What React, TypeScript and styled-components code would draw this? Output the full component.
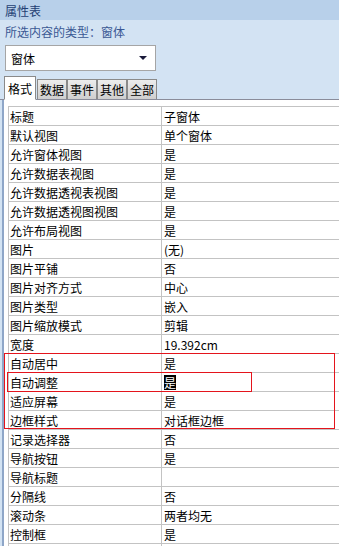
import React from "react";
import styled, { createGlobalStyle } from "styled-components";

const Global = createGlobalStyle`
  html, body { margin: 0; padding: 0; overflow: hidden; }
  body {
    background: #d3e3f3;
    font-family: "Noto Sans CJK SC", "Noto Sans", sans-serif;
    font-size: 12px;
  }
`;

const Sheet = styled.div`
  width: 339px;
  height: 546px;
  display: flex;
  flex-direction: column;
  background: #d3e3f3;
  overflow: hidden;
  & > * { flex-shrink: 0; }
`;

const TitleBar = styled.div`
  height: 20px;
  background: #b8d0ea;
  color: #1f3f73;
  padding-left: 5px;
  display: flex;
  align-items: center;
  font-size: 12px;
`;

const Caption = styled.div`
  height: 22px;
  padding-left: 5px;
  display: flex;
  align-items: center;
  color: #3a5894;
`;

const Select = styled.div`
  margin: 3px 0 0 5px;
  height: 24px;
  background: #fff;
  border: 1px solid #a5a5a5;
  display: flex;
  align-items: center;
  justify-content: space-between;
  padding: 0 8px 0 5px;
  box-sizing: content-box;
  width: 136px;
  color: #000;
`;

const Arrow = styled.span`
  width: 0;
  height: 0;
  border-left: 4px solid transparent;
  border-right: 4px solid transparent;
  border-top: 4px solid #1a1a3a;
`;

const TabRow = styled.div`
  margin-top: 5px;
  display: flex;
  align-items: flex-end;
  padding-left: 4px;
  height: 23px;
  border-bottom: 1px solid #8a8c9a;
`;

const Tab = styled.div<{ $active?: boolean }>`
  width: ${(p) => (p.$active ? "32px" : "30px")};
  height: ${(p) => (p.$active ? "24px" : "20px")};
  margin-right: ${(p) => (p.$active ? "1px" : "0")};
  margin-bottom: ${(p) => (p.$active ? "-1px" : "0")};
  display: flex;
  align-items: center;
  justify-content: center;
  box-sizing: border-box;
  color: #000;
  border: 1px solid #8a8a8a;
  border-bottom: ${(p) => (p.$active ? "1px solid #fff" : "none")};
  background: ${(p) =>
    p.$active ? "#fff" : "linear-gradient(#ececec, #cfcfcf)"};
`;

const Panel = styled.div`
  flex: 1 1 auto;
  min-height: 0;
  overflow: hidden;
  background: #fff;
  margin-left: 2px;
  border-left: 2px solid #8ea6c8;
  padding: 6px 0 0 4px;
`;

const Table = styled.div`
  position: relative;
  border-top: 1px solid #c3c3c3;
  border-left: 1px solid #c3c3c3;
`;

const Row = styled.div`
  display: grid;
  grid-template-columns: 152px 1fr;
  height: 19px;
  box-sizing: border-box;
  border-bottom: 1px solid #c3c3c3;
`;

const Cell = styled.div<{ $value?: boolean }>`
  display: flex;
  align-items: center;
  padding-left: ${(p) => (p.$value ? "2px" : "1px")};
  color: #000;
  white-space: nowrap;
  overflow: hidden;
  ${(p) => (p.$value ? "border-left: 1px solid #c3c3c3;" : "")}
`;

const Selected = styled.span`
  background: #000;
  color: #fff;
  line-height: 15px;
`;

const Mark = styled.div<{ $l: number; $t: number; $w: number; $h: number }>`
  position: absolute;
  left: ${(p) => p.$l}px;
  top: ${(p) => p.$t}px;
  width: ${(p) => p.$w}px;
  height: ${(p) => p.$h}px;
  box-sizing: border-box;
  border: 1px solid #e4141c;
  pointer-events: none;
`;

const rows: [string, string][] = [
  ["标题", "子窗体"],
  ["默认视图", "单个窗体"],
  ["允许窗体视图", "是"],
  ["允许数据表视图", "是"],
  ["允许数据透视表视图", "是"],
  ["允许数据透视图视图", "是"],
  ["允许布局视图", "是"],
  ["图片", "(无)"],
  ["图片平铺", "否"],
  ["图片对齐方式", "中心"],
  ["图片类型", "嵌入"],
  ["图片缩放模式", "剪辑"],
  ["宽度", "19.392cm"],
  ["自动居中", "是"],
  ["自动调整", "是"],
  ["适应屏幕", "是"],
  ["边框样式", "对话框边框"],
  ["记录选择器", "否"],
  ["导航按钮", "是"],
  ["导航标题", ""],
  ["分隔线", "否"],
  ["滚动条", "两者均无"],
  ["控制框", "是"],
  ["", ""],
];

export default function App() {
  return (
    <>
      <Global />
      <Sheet>
        <TitleBar>属性表</TitleBar>
        <Caption>所选内容的类型：窗体</Caption>
        <Select>
          <span>窗体</span>
          <Arrow />
        </Select>
        <TabRow>
          <Tab $active>格式</Tab>
          <Tab>数据</Tab>
          <Tab>事件</Tab>
          <Tab>其他</Tab>
          <Tab>全部</Tab>
        </TabRow>
        <Panel>
          <Table>
            {rows.map(([k, v], i) => (
              <Row key={i}>
                <Cell>{k}</Cell>
                <Cell $value>
                  {i === 14 ? <Selected>{v}</Selected> : v}
                </Cell>
              </Row>
            ))}
            <Mark $l={-5} $t={246} $w={331} $h={76} />
            <Mark $l={-2} $t={265} $w={245} $h={20} />
          </Table>
        </Panel>
      </Sheet>
    </>
  );
}
